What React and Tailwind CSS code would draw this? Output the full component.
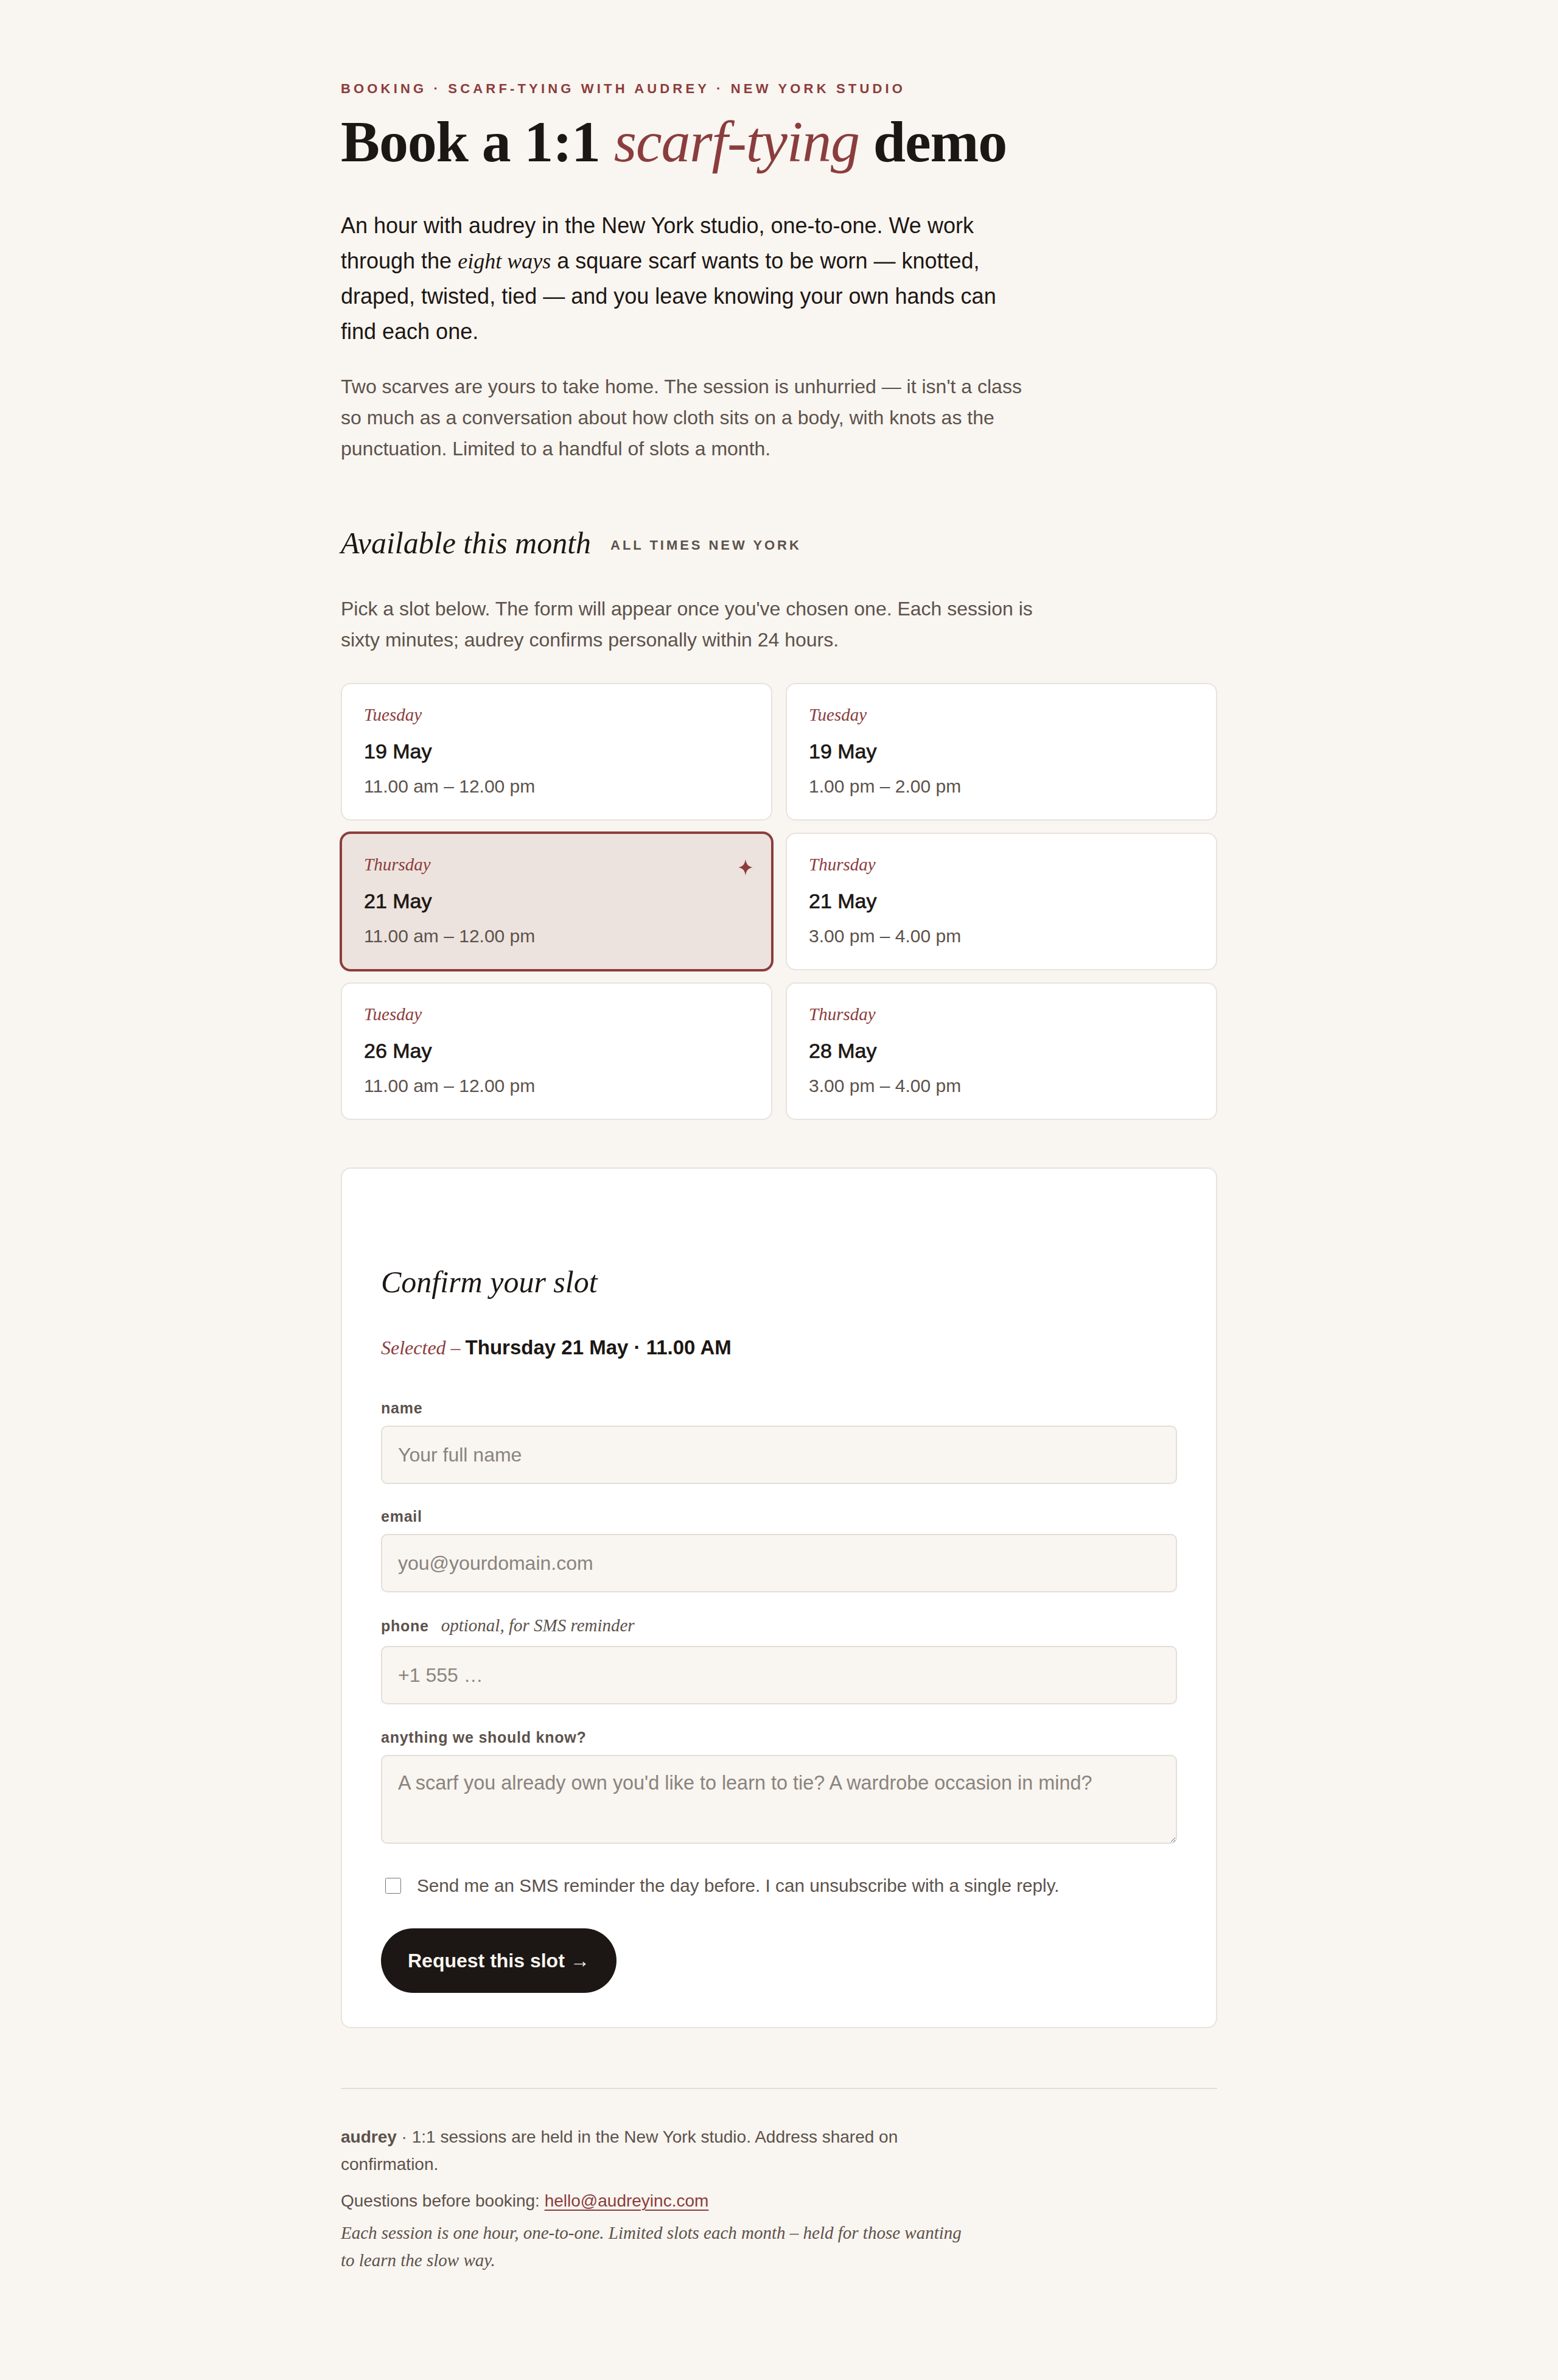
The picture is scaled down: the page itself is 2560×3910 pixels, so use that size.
import React from "react";

const serif = "font-['Liberation_Serif','Times_New_Roman',serif]";

const slots = [
  { day: "Tuesday", date: "19 May", time: "11.00 am – 12.00 pm" },
  { day: "Tuesday", date: "19 May", time: "1.00 pm – 2.00 pm" },
  { day: "Thursday", date: "21 May", time: "11.00 am – 12.00 pm", selected: true },
  { day: "Thursday", date: "21 May", time: "3.00 pm – 4.00 pm" },
  { day: "Tuesday", date: "26 May", time: "11.00 am – 12.00 pm" },
  { day: "Thursday", date: "28 May", time: "3.00 pm – 4.00 pm" },
];

function Sparkle() {
  return (
    <svg viewBox="0 0 24 24" className="absolute top-[41px] right-[28px] w-[28px] h-[28px]" aria-hidden="true">
      <path d="M12 0.5 C13 7 15 10.5 22 12 C15 13.5 13 17 12 23.5 C11 17 9 13.5 2 12 C9 10.5 11 7 12 0.5 Z" fill="#8b3d3d" />
    </svg>
  );
}

function SlotCard({ slot }) {
  const base = "relative rounded-[16px] border-2 px-[36px] pt-[32px] pb-[34px] text-left";
  const cls = slot.selected
    ? base + " bg-[#ede3de] border-[#8b3d3d] shadow-[0_0_0_2px_#8b3d3d]"
    : base + " bg-white border-[#e8e3de]";
  return (
    <div className={cls}>
      {slot.selected && <Sparkle />}
      <div className={serif + " italic text-[29px] leading-[36px] text-[#8b3d3d]"}>{slot.day}</div>
      <div className="mt-[20px] text-[34px] leading-[44px] font-normal [-webkit-text-stroke:0.7px_#1c1714] text-[#1c1714]">{slot.date}</div>
      <div className="mt-[15px] text-[30px] leading-[41px] text-[#5c524c]">{slot.time}</div>
    </div>
  );
}

function Label({ children, className = "" }) {
  return (
    <div className={"text-[25px] leading-[33px] font-bold tracking-[0.03em] text-[#5c524c] " + className}>
      {children}
    </div>
  );
}

const inputCls =
  "block w-full h-[96px] rounded-[10px] border-2 border-[#e3ded8] bg-[#f9f5f0] px-[26px] text-[32px] text-[#1c1714] placeholder:text-[#8a837e] outline-none";

export default function App() {
  return (
    <div className="min-h-screen bg-[#f9f5f0] font-['Liberation_Sans',Arial,sans-serif] text-[#1c1714]">
      <main className="mx-auto max-w-[1440px] pt-[130px] pb-[177px]">
        <p className="text-[22px] leading-[32px] font-bold tracking-[0.235em] uppercase text-[#8b3d3d]">
          Booking · Scarf-tying with audrey · New York studio
        </p>
        <h1 className={serif + " mt-[18px] text-[96px] leading-[106px] font-semibold tracking-[-0.012em] text-[#1c1714]"}>
          Book a 1:1 <em className="font-normal text-[#8b3d3d]">scarf-tying</em> demo
        </h1>
        <p className="mt-[56px] max-w-[1120px] text-[36px] leading-[58px] text-[#1c1714]">
          An hour with audrey in the New York studio, one-to-one. We work through the{" "}
          <em className={serif}>eight ways</em> a square scarf wants to be worn — knotted, draped, twisted, tied — and you leave knowing your own hands can find each one.
        </p>
        <p className="mt-[36px] max-w-[1150px] text-[32px] leading-[51px] text-[#5c524c]">
          Two scarves are yours to take home. The session is unhurried — it isn't a class so much as a conversation about how cloth sits on a body, with knots as the punctuation. Limited to a handful of slots a month.
        </p>

        <div className="mt-[99px] flex items-center gap-[32px]">
          <h2 className={serif + " italic text-[50px] leading-[60px] text-[#1c1714]"}>Available this month</h2>
          <span className="mt-[8px] text-[22px] leading-[30px] font-bold tracking-[0.18em] uppercase text-[#5c524c]">
            All times New York
          </span>
        </div>
        <p className="mt-[53px] max-w-[1160px] text-[32px] leading-[51px] text-[#5c524c]">
          Pick a slot below. The form will appear once you've chosen one. Each session is sixty minutes; audrey confirms personally within 24 hours.
        </p>

        <div className="mt-[45px] grid grid-cols-2 gap-x-[22px] gap-y-[20px]">
          {slots.map((s, i) => (
            <SlotCard key={i} slot={s} />
          ))}
        </div>

        <section className="mt-[78px] rounded-[16px] border-2 border-[#e8e3de] bg-white px-[64px] pt-[156px] pb-[56px]">
          <h3 className={serif + " italic text-[50px] leading-[60px] text-[#1c1714]"}>Confirm your slot</h3>
          <p className="mt-[55px] text-[33px] leading-[45px]">
            <span className={serif + " italic text-[32px] text-[#8b3d3d]"}>Selected – </span>
            <span className="font-bold text-[#1c1714]">Thursday 21 May · 11.00 AM</span>
          </p>

          <Label className="mt-[60px]">name</Label>
          <input className={inputCls + " mt-[12px]"} placeholder="Your full name" />

          <Label className="mt-[37px]">email</Label>
          <input className={inputCls + " mt-[12px]"} placeholder="you@yourdomain.com" />

          <div className="mt-[38px] flex items-baseline gap-[20px]">
            <Label>phone</Label>
            <span className={serif + " italic text-[29px] leading-[33px] text-[#5c524c]"}>optional, for SMS reminder</span>
          </div>
          <input className={inputCls + " mt-[16px]"} placeholder="+1 555 …" />

          <Label className="mt-[38px]">anything we should know?</Label>
          <textarea
            className="mt-[12px] block w-full h-[146px] rounded-[10px] border-2 border-[#e3ded8] bg-[#f9f5f0] px-[26px] pt-[22px] text-[32.4px] leading-[45px] text-[#1c1714] placeholder:text-[#8a837e] outline-none"
            placeholder="A scarf you already own you'd like to learn to tie? A wardrobe occasion in mind?"
          />

          <label className="mt-[47px] flex items-center gap-[26px] pl-[7px]">
            <input type="checkbox" className="m-0 w-[26px] h-[26px] shrink-0" />
            <span className="text-[29.7px] leading-[44px] text-[#5c524c]">
              Send me an SMS reminder the day before. I can unsubscribe with a single reply.
            </span>
          </label>

          <button className="mt-[48px] h-[106px] rounded-full bg-[#1c1714] px-[44px] text-[32px] font-bold text-[#f9f5f0]">
            Request this slot →
          </button>
        </section>

        <footer className="mt-[98px] border-t-2 border-[#e3ded8] pt-[56px]">
          <p className="max-w-[1030px] text-[28px] leading-[45px] text-[#5c524c]">
            <strong className="font-bold">audrey</strong> · 1:1 sessions are held in the New York studio. Address shared on confirmation.
          </p>
          <p className="mt-[15px] max-w-[1030px] text-[28px] leading-[45px] text-[#5c524c]">
            Questions before booking:{" "}
            <a className="text-[#8b3d3d] underline decoration-[2px] underline-offset-[5px]" href="#">
              hello@audreyinc.com
            </a>
          </p>
          <p className={serif + " mt-[8px] max-w-[1030px] italic text-[29px] leading-[45px] text-[#5c524c]"}>
            Each session is one hour, one-to-one. Limited slots each month – held for those wanting to learn the slow way.
          </p>
        </footer>
      </main>
    </div>
  );
}
